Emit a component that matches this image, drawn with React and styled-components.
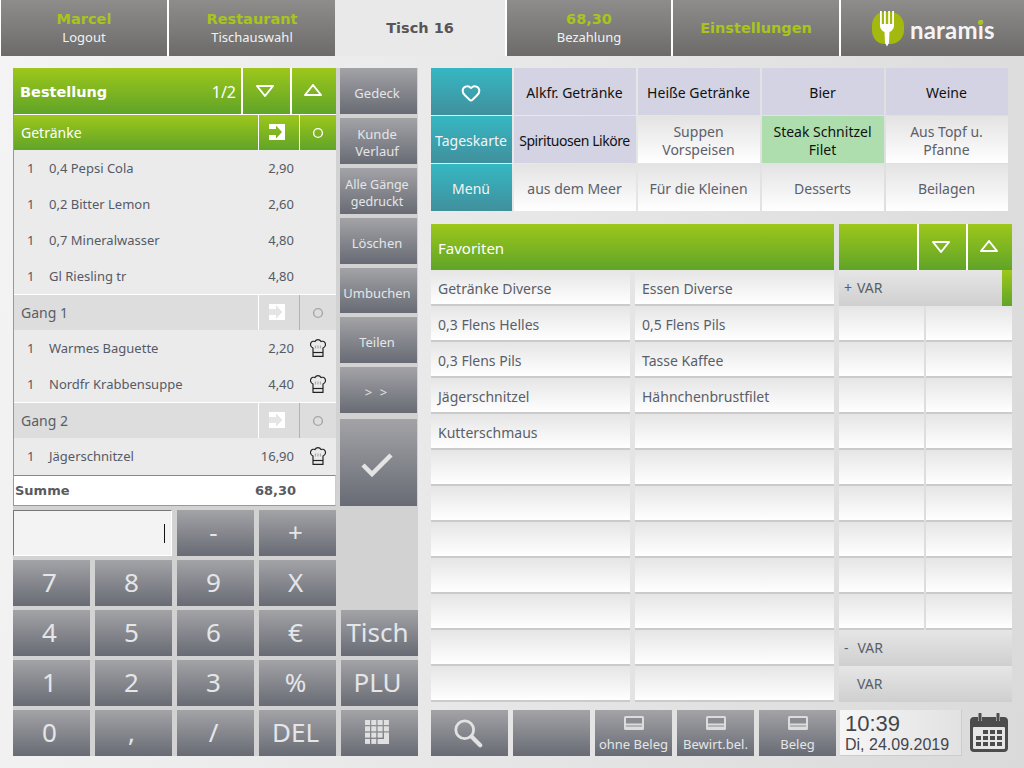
import React from "react";
import styled, { createGlobalStyle, css } from "styled-components";
import { Heart } from "lucide-react";

const GlobalStyle = createGlobalStyle`
  html, body {
    margin: 0;
    padding: 0;
    height: 768px;
    overflow: hidden;
  }
  body {
    font-family: "Noto Sans", "Open Sans", sans-serif;
    background: #e4e4e4;
  }
  * { box-sizing: border-box; }
`;

const greyButton = css`
  background: linear-gradient(#a3a3a7, #686b74);
  color: #e4e6e8;
`;

const greenBar = css`
  background: linear-gradient(#9dc71b, #60a428);
  color: #fff;
`;

const Page = styled.div`
  width: 1024px;
  height: 768px;
  display: flex;
  flex-direction: column;
  background: linear-gradient(100deg, #f4f4f4 0%, #ebebeb 35%, #dadada 100%);
`;

const Nav = styled.nav`
  height: 56px;
  display: grid;
  grid-template-columns: 166px 166px 168px 164px 166px 1fr;
  column-gap: 2px;
  padding-left: 1px;
  background: #fff;
`;

const NavTab = styled.div`
  display: flex;
  flex-direction: column;
  align-items: center;
  justify-content: center;
  background: ${(p) => (p.$active ? "#e9e9e9" : "linear-gradient(#8e8d8c, #6c6b6a)")};
  margin-left: ${(p) => (p.$active ? -2 : 0)}px;
`;

const NavTitle = styled.div`
  font-family: "DejaVu Sans", sans-serif;
  font-weight: 700;
  font-size: 14.5px;
  line-height: 18px;
  margin-top: -1px;
  color: ${(p) => (p.$active ? "#55555a" : "#a8c51a")};
`;

const NavSub = styled.div`
  font-size: 13px;
  line-height: 18px;
  color: #f2f2f2;
`;

const LogoTab = styled(NavTab)`
  flex-direction: row;
  justify-content: flex-start;
  padding-left: 30px;
  gap: 5px;
`;

const LogoText = styled.span`
  font-family: "Lato", sans-serif;
  font-weight: 700;
  font-size: 24px;
  margin-top: 2px;
  letter-spacing: 0.2px;
  color: #f4f4f4;
  position: relative;
`;

const LogoDot = styled.i`
  position: absolute;
  width: 5px;
  height: 5px;
  border-radius: 50%;
  background: #a8c51a;
  right: 12px;
  top: 5px;
`;

const Main = styled.main`
  flex: 1;
  display: flex;
  gap: 13px;
  padding: 12px 12px 12px 13px;
`;

const LeftColumn = styled.section`
  width: 405px;
  display: flex;
  flex-direction: column;
`;

const TopArea = styled.div`
  display: flex;
  height: 438px;
`;

const OrderPanel = styled.div`
  width: 323px;
  display: flex;
  flex-direction: column;
`;

const BarHeader = styled.div`
  ${greenBar}
  height: 46px;
  display: flex;
  align-items: center;
  flex-shrink: 0;
`;

const BarTitle = styled.div`
  flex: 1;
  padding: 2px 0 0 7px;
  font-family: "DejaVu Sans", sans-serif;
  font-weight: 700;
  font-size: 14.5px;
`;

const BarCount = styled.div`
  font-size: 16px;
  padding: 2px 5px 0 0;
`;

const ArrowCell = styled.div`
  width: ${(p) => p.$width || 46}px;
  height: 100%;
  padding-right: 3px;
  border-left: 2px solid #fff;
  display: flex;
  align-items: center;
  justify-content: center;
`;

const OrderRows = styled.div`
  flex: 1;
  display: flex;
  flex-direction: column;
  background: #ebebeb;
  border-left: 1px solid #999;
`;

const GroupRow = styled.div`
  height: 36px;
  display: flex;
  align-items: center;
  font-size: 14px;
  border-top: 1px solid #fff;
  ${(p) => (p.$active ? greenBar : "background: #dcdddc; color: #5a5e68;")}
`;

const GroupName = styled.div`
  flex: 1;
  padding-left: 7px;
`;

const GroupCell = styled.div`
  height: 100%;
  width: ${(p) => p.$width}px;
  padding-right: ${(p) => p.$shift || 0}px;
  border-left: 1px solid ${(p) => p.$line};
  display: flex;
  align-items: center;
  justify-content: center;
`;

const OrderRow = styled.div`
  height: 36px;
  display: grid;
  grid-template-columns: 22px 1fr 50px 42px;
  align-items: center;
  padding-left: 13px;
  font-size: 13px;
  color: #555a66;
`;

const Price = styled.div`
  text-align: right;
`;

const HatCell = styled.div`
  display: flex;
  justify-content: center;
  padding-left: 6px;
`;

const SumRow = styled.div`
  height: 31px;
  display: flex;
  align-items: center;
  justify-content: space-between;
  padding: 0 39px 0 1px;
  background: #fff;
  border-top: 1px solid #888;
  border-bottom: 1px solid #999;
  border-right: 1px solid #ccc;
  margin-top: auto;
  font-family: "DejaVu Sans", sans-serif;
  font-weight: 700;
  font-size: 13px;
  color: #5a5a60;
`;

const SideColumn = styled.div`
  width: 82px;
  display: flex;
  flex-direction: column;
  gap: 4px;
  padding: 0 1px 0 4px;
  background: #d2d2d2;
`;

const SideButton = styled.div`
  ${greyButton}
  height: ${(p) => (p.$tall ? 87 : 46)}px;
  margin-top: ${(p) => (p.$tall ? 2 : 0)}px;
  padding: 5px 3px 0 0;
  display: flex;
  align-items: center;
  justify-content: center;
  text-align: center;
  white-space: pre-line;
  font-size: ${(p) => p.$size || 13}px;
  letter-spacing: ${(p) => p.$spacing || 0}px;
  line-height: 17px;
`;

const Keypad = styled.div`
  display: grid;
  grid-template-columns: repeat(5, 77px);
  grid-auto-rows: 46px;
  gap: 4px 5px;
  padding-top: 4px;
  background: #d2d2d2;
`;

const Display = styled.div`
  grid-column: span 2;
  display: flex;
  align-items: center;
  justify-content: flex-end;
  padding-right: 6px;
  background: #f3f3f3;
  border-top: 1px solid #777;
  border-left: 1px solid #777;
  border-bottom: 1px solid #fff;
  border-right: 1px solid #fff;
`;

const Caret = styled.span`
  width: 1px;
  height: 19px;
  background: #111;
`;

const KeySpacer = styled.div`
  grid-column: 5;
  grid-row: 1 / 3;
`;

const Key = styled.div`
  ${greyButton}
  display: flex;
  align-items: center;
  justify-content: center;
  padding: 0 4px 2px 0;
  font-size: 26px;
`;

const RightColumn = styled.section`
  flex: 1;
  display: flex;
  flex-direction: column;
`;

const CategoryGrid = styled.div`
  width: 577px;
  display: grid;
  grid-template-columns: 81px repeat(4, 122px);
  grid-auto-rows: 47px;
  gap: 1px 2px;
  margin-bottom: 13px;
`;

const categoryKinds = {
  teal: css`
    background: linear-gradient(#36b7c4, #40909c);
    color: #f4f4f4;
  `,
  lilac: css`
    background: #d3d3e3;
    color: #111;
  `,
  green: css`
    background: #aedeae;
    color: #111;
  `,
  plain: css`
    background: linear-gradient(#e3e3e3, #fff);
    color: #5d6069;
  `,
};

const Category = styled.div`
  ${(p) => categoryKinds[p.$kind]}
  display: flex;
  align-items: center;
  justify-content: center;
  padding: 2px 1px 0 0;
  text-align: center;
  font-size: 14px;
  letter-spacing: ${(p) => (p.$tight ? -0.45 : 0)}px;
  line-height: 18px;
  white-space: pre-line;
`;

const ListsArea = styled.div`
  display: flex;
  gap: 5px;
`;

const Favorites = styled.div`
  width: 403px;
`;

const FavHeader = styled(BarHeader)`
  padding: 1px 0 0 7px;
  font-size: 15px;
`;

const FavGrid = styled.div`
  display: grid;
  grid-template-columns: 199px 199px;
  grid-auto-rows: 36px;
  column-gap: 5px;
`;

const ListItem = styled.div`
  display: flex;
  align-items: center;
  padding: 2px 0 0 7px;
  font-size: 14px;
  color: #5a5e68;
  background: linear-gradient(#e5e5e5, #fff);
  border-bottom: 2px solid #cbcbcb;
`;

const VarColumn = styled.div`
  width: 173px;
`;

const VarRow = styled.div`
  height: 36px;
  display: flex;
  align-items: center;
  gap: ${(p) => p.$gap || 5}px;
  padding: 0 0 2px ${(p) => p.$indent || 5}px;
  font-size: 14px;
  color: #5a5e68;
  background: linear-gradient(#e6e6e6, #cfcfcf);
  position: relative;
`;

const VarMarker = styled.i`
  position: absolute;
  top: 0;
  right: 0;
  bottom: 0;
  width: 10px;
  background: linear-gradient(#9dc71b, #60a428);
`;

const VarGrid = styled.div`
  display: grid;
  grid-template-columns: 85px 86px;
  grid-auto-rows: 36px;
  column-gap: 2px;
  width: 173px;
`;

const VarCell = styled.div`
  background: linear-gradient(#e5e5e5, #fff);
  border-bottom: 2px solid #cbcbcb;
`;

const BottomBar = styled.div`
  display: flex;
  align-items: stretch;
  height: 46px;
  gap: 5px;
  margin-top: 8px;
`;

const ToolButton = styled.div`
  ${greyButton}
  width: 77px;
  display: flex;
  flex-direction: column;
  align-items: center;
  justify-content: center;
  padding-right: 3px;
`;

const ReceiptButton = styled(ToolButton)`
  justify-content: flex-start;
  padding: 6px 0 0;
  gap: 6px;
  font-size: 13px;
  line-height: 16px;
  white-space: nowrap;
`;

const Clock = styled.div`
  width: 122px;
  margin-left: -1px;
  padding-left: 5px;
  display: flex;
  flex-direction: column;
  justify-content: center;
  font-family: "Liberation Sans", Arial, sans-serif;
  background: linear-gradient(90deg, #f6f6f6, #e2e2e2);
  border-bottom: 1px solid #ccc;
  border-right: 1px solid #ccc;
  color: #45454c;
  white-space: nowrap;
`;

const ClockTime = styled.div`
  font-size: 22px;
  line-height: 25px;
`;

const ClockDate = styled.div`
  font-size: 16px;
  line-height: 18px;
`;

const CalendarCell = styled.div`
  flex: 1;
  display: flex;
  align-items: center;
  padding-left: 3px;
`;

const TriangleIcon = ({ up }) => (
  <svg width="20" height="14" viewBox="0 0 20 14" fill="none" stroke="#fff" strokeWidth="2" strokeLinejoin="round">
    {up ? <path d="M10 1 L18 11 H2 Z" /> : <path d="M2 2 H18 L10 12 Z" />}
  </svg>
);

const ForwardIcon = ({ dim }) => (
  <svg width="17" height="17" viewBox="0 0 17 17">
    <path fill="#fff" fillRule="evenodd" d="M0 0 H16 V16 H0 V11 H7 V14.5 L13 8 L7 1.5 V5 H0 Z" />
    {dim && <path fill="#e4e5e4" d="M0 5 H7 V1.5 L13 8 L7 14.5 V11 H0 Z" />}
  </svg>
);

const RingIcon = ({ dim }) => (
  <svg width="12" height="12" viewBox="0 0 12 12" fill="none">
    <circle cx="6" cy="6" r="4.4" stroke={dim ? "#a5a7a5" : "#fff"} strokeWidth="1.4" />
  </svg>
);

const HatIcon = () => (
  <svg width="16" height="18" viewBox="0 0 16 18" fill="none" stroke="#222" strokeWidth="1.2" strokeLinejoin="round">
    <path d="M3 9 C0.5 8 0 5.5 1 3.8 C2 2.2 4 2 5 2.6 C5.8 1 7 0.6 8 0.6 C9 0.6 10.2 1 11 2.6 C12 2 14 2.2 15 3.8 C16 5.5 15.5 8 13 9 L13 17.4 H3 Z" />
    <path d="M3 13.5 H13" />
    <path d="M5.5 6.5 V9.5 M8 6.5 V9.5 M10.5 6.5 V9.5" stroke="#aaa" />
  </svg>
);

const CheckIcon = () => (
  <svg width="32" height="24" viewBox="0 0 32 24" fill="none" stroke="#e4e4e4" strokeWidth="4.5">
    <path d="M2 12 L11 21 L30 2" />
  </svg>
);

const KeyboardIcon = () => {
  const squares = [];
  for (let row = 0; row < 4; row++) {
    for (let col = 0; col < 4; col++) {
      if (!(row === 3 && col === 3) && !(row === 2 && col === 3) && !(row === 3 && col === 2)) {
        squares.push(<rect key={`${row}-${col}`} x={col * 6.3} y={row * 6.3} width="5" height="5" />);
      }
    }
  }
  return (
    <svg width="25" height="25" viewBox="0 0 25 25" fill="#e0e0e0">
      {squares}
      <path d="M19 12.6 H24 V24 H12.6 V19 H19 Z" />
    </svg>
  );
};

const SearchIcon = () => (
  <svg width="30" height="30" viewBox="0 0 32 32" fill="none" stroke="#e2e2e2">
    <circle cx="12.5" cy="12.5" r="9.5" strokeWidth="3" />
    <path d="M20 20 L29 29" strokeWidth="4.5" strokeLinecap="round" />
  </svg>
);

const ReceiptIcon = () => (
  <svg width="20" height="14" viewBox="0 0 20 14">
    <rect width="20" height="14" rx="1.5" fill="#dcdcdc" />
    <rect x="2" y="2" width="16" height="5.5" fill="#8b8d92" />
    <rect x="2" y="9.5" width="16" height="1" fill="#8b8d92" />
  </svg>
);

const CalendarIcon = () => (
  <svg width="38" height="40" viewBox="0 0 38 40">
    <path
      fill="#4c4c4c"
      d="M4 4 H8 V8 H12 V4 H26 V8 H30 V4 H34 C36.5 4 38 5.5 38 8 V35 C38 37.5 36.5 39 34 39 H4 C1.5 39 0 37.5 0 35 V8 C0 5.5 1.5 4 4 4 Z"
    />
    <rect x="3" y="14" width="32" height="22" rx="1" fill="#e6e6e6" />
    <path d="M10 1 V7 M28 1 V7" stroke="#4c4c4c" strokeWidth="3" strokeLinecap="round" fill="none" />
    <g fill="#4c4c4c">
      <rect x="13" y="17" width="5" height="4" />
      <rect x="20" y="17" width="5" height="4" />
      <rect x="27" y="17" width="5" height="4" />
      <rect x="6" y="23" width="5" height="4" />
      <rect x="13" y="23" width="5" height="4" />
      <rect x="20" y="23" width="5" height="4" />
      <rect x="27" y="23" width="5" height="4" />
      <rect x="6" y="29" width="5" height="4" />
      <rect x="13" y="29" width="5" height="4" />
      <rect x="20" y="29" width="5" height="4" />
      <rect x="27" y="29" width="5" height="4" />
    </g>
  </svg>
);

const LogoMark = () => (
  <svg width="34" height="37" viewBox="0 0 34 37">
    <path fill="#a3b90e" d="M14 2 H19 C27 2 33 8 33 16 V20 C33 28 27 34 19 34 H14 C6 34 1 28 1 20 V16 C1 8 6 2 14 2 Z" />
    <path
      fill="#fff"
      d="M9 1 H10.8 V14 H13 V1 H14.8 V14 H17.2 V1 H19 V14 H21.2 V1 H23 V16 C23 19 20 21.5 18.5 22 L18 33 L16 36.5 L14 33 L13.5 22 C12 21.5 9 19 9 16 Z"
    />
  </svg>
);

const order = [
  { group: "Getränke", active: true },
  { name: "0,4 Pepsi Cola", price: "2,90" },
  { name: "0,2 Bitter Lemon", price: "2,60" },
  { name: "0,7 Mineralwasser", price: "4,80" },
  { name: "Gl Riesling tr", price: "4,80" },
  { group: "Gang 1" },
  { name: "Warmes Baguette", price: "2,20", hat: true },
  { name: "Nordfr Krabbensuppe", price: "4,40", hat: true },
  { group: "Gang 2" },
  { name: "Jägerschnitzel", price: "16,90", hat: true },
];

const sideButtons = [
  { label: "Gedeck" },
  { label: "Kunde\nVerlauf" },
  { label: "Alle Gänge\ngedruckt", size: 12.5 },
  { label: "Löschen" },
  { label: "Umbuchen" },
  { label: "Teilen" },
  { label: "> >", spacing: 2 },
];

const keys = ["7", "8", "9", "X", "4", "5", "6", "€", "Tisch", "1", "2", "3", "%", "PLU", "0", ",", "/", "DEL"];

const categories = [
  { label: "Tageskarte", kind: "teal" },
  { label: "Spirituosen Liköre", kind: "lilac", tight: true },
  { label: "Suppen\nVorspeisen", kind: "plain" },
  { label: "Steak Schnitzel\nFilet", kind: "green" },
  { label: "Aus Topf u.\nPfanne", kind: "plain" },
  { label: "Menü", kind: "teal" },
  { label: "aus dem Meer", kind: "plain" },
  { label: "Für die Kleinen", kind: "plain" },
  { label: "Desserts", kind: "plain" },
  { label: "Beilagen", kind: "plain" },
];

const topCategories = ["Alkfr. Getränke", "Heiße Getränke", "Bier", "Weine"];

const favorites = [
  "Getränke Diverse", "Essen Diverse",
  "0,3 Flens Helles", "0,5 Flens Pils",
  "0,3 Flens Pils", "Tasse Kaffee",
  "Jägerschnitzel", "Hähnchenbrustfilet",
  "Kutterschmaus",
];

const App = () => {
  return (
    <Page>
      <GlobalStyle />
      <Nav>
        <NavTab>
          <NavTitle>Marcel</NavTitle>
          <NavSub>Logout</NavSub>
        </NavTab>
        <NavTab>
          <NavTitle>Restaurant</NavTitle>
          <NavSub>Tischauswahl</NavSub>
        </NavTab>
        <NavTab $active>
          <NavTitle $active>Tisch 16</NavTitle>
        </NavTab>
        <NavTab>
          <NavTitle>68,30</NavTitle>
          <NavSub>Bezahlung</NavSub>
        </NavTab>
        <NavTab>
          <NavTitle>Einstellungen</NavTitle>
        </NavTab>
        <LogoTab>
          <LogoMark />
          <LogoText>
            naramis
            <LogoDot />
          </LogoText>
        </LogoTab>
      </Nav>

      <Main>
        <LeftColumn>
          <TopArea>
            <OrderPanel>
              <BarHeader>
                <BarTitle>Bestellung</BarTitle>
                <BarCount>1/2</BarCount>
                <ArrowCell $width={49}><TriangleIcon /></ArrowCell>
                <ArrowCell><TriangleIcon up /></ArrowCell>
              </BarHeader>
              <OrderRows>
                {order.map((row) =>
                  row.group ? (
                    <GroupRow key={row.group} $active={row.active}>
                      <GroupName>{row.group}</GroupName>
                      <GroupCell $width={41} $shift={4} $line="#fff"><ForwardIcon dim={!row.active} /></GroupCell>
                      <GroupCell $width={37} $line={row.active ? "#fff" : "#b4bd7a"}><RingIcon dim={!row.active} /></GroupCell>
                    </GroupRow>
                  ) : (
                    <OrderRow key={row.name}>
                      <div>1</div>
                      <div>{row.name}</div>
                      <Price>{row.price}</Price>
                      <HatCell>{row.hat && <HatIcon />}</HatCell>
                    </OrderRow>
                  )
                )}
                <SumRow>
                  <span>Summe</span>
                  <span>68,30</span>
                </SumRow>
              </OrderRows>
            </OrderPanel>
            <SideColumn>
              {sideButtons.map((b) => (
                <SideButton key={b.label} $size={b.size} $spacing={b.spacing}>
                  {b.label}
                </SideButton>
              ))}
              <SideButton $tall><CheckIcon /></SideButton>
            </SideColumn>
          </TopArea>
          <Keypad>
            <Display><Caret /></Display>
            <Key>-</Key>
            <Key>+</Key>
            <KeySpacer />
            {keys.map((k) => (
              <Key key={k}>{k}</Key>
            ))}
            <Key><KeyboardIcon /></Key>
          </Keypad>
        </LeftColumn>

        <RightColumn>
          <CategoryGrid>
            <Category $kind="teal"><Heart size={20} strokeWidth={2.4} color="#fff" /></Category>
            {topCategories.map((c) => (
              <Category key={c} $kind="lilac">{c}</Category>
            ))}
            {categories.map((c) => (
              <Category key={c.label} $kind={c.kind} $tight={c.tight}>{c.label}</Category>
            ))}
          </CategoryGrid>

          <ListsArea>
            <Favorites>
              <FavHeader>Favoriten</FavHeader>
              <FavGrid>
                {Array.from({ length: 24 }, (_, i) => (
                  <ListItem key={i}>{favorites[i]}</ListItem>
                ))}
              </FavGrid>
            </Favorites>
            <VarColumn>
              <BarHeader>
                <div style={{ flex: 1 }} />
                <ArrowCell $width={49}><TriangleIcon /></ArrowCell>
                <ArrowCell><TriangleIcon up /></ArrowCell>
              </BarHeader>
              <VarRow>
                <span>+</span>
                <span>VAR</span>
                <VarMarker />
              </VarRow>
              <VarGrid>
                {Array.from({ length: 18 }, (_, i) => (
                  <VarCell key={i} />
                ))}
              </VarGrid>
              <VarRow $gap={9}>
                <span>-</span>
                <span>VAR</span>
              </VarRow>
              <VarRow $indent={18}>
                <span>VAR</span>
              </VarRow>
            </VarColumn>
          </ListsArea>

          <BottomBar>
            <ToolButton><SearchIcon /></ToolButton>
            <ToolButton />
            <ReceiptButton><ReceiptIcon />ohne Beleg</ReceiptButton>
            <ReceiptButton><ReceiptIcon />Bewirt.bel.</ReceiptButton>
            <ReceiptButton><ReceiptIcon />Beleg</ReceiptButton>
            <Clock>
              <ClockTime>10:39</ClockTime>
              <ClockDate>Di, 24.09.2019</ClockDate>
            </Clock>
            <CalendarCell><CalendarIcon /></CalendarCell>
          </BottomBar>
        </RightColumn>
      </Main>
    </Page>
  );
};

export default App;
